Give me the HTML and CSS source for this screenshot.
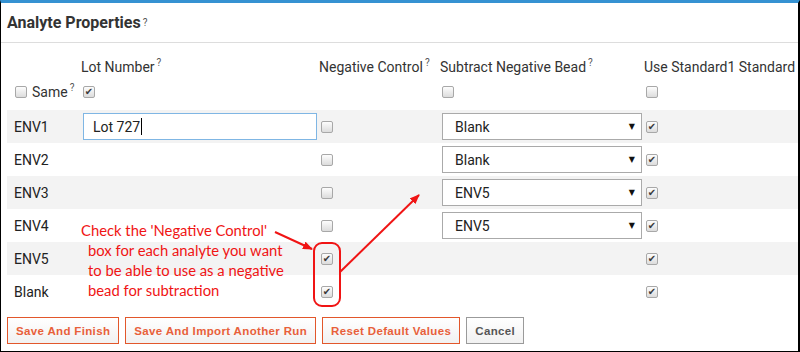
FILE: index.html
```html
<!DOCTYPE html>
<html>
<head>
<meta charset="utf-8">
<link rel="stylesheet" href="styles.css">
</head>
<body>
<div class="frame">
  <div class="title">Analyte Properties<sup class="q">?</sup></div>
  <div class="panel">
    <div class="row head">
      <div></div>
      <div>Lot Number<sup class="q">?</sup></div>
      <div>Negative Control<sup class="q">?</sup></div>
      <div>Subtract Negative Bead<sup class="q">?</sup></div>
      <div class="clip">Use Standard1 Standard</div>
    </div>
    <div class="row same">
      <div class="samecell"><span class="cb"></span><span class="samelbl">Same<sup class="q">?</sup></span></div>
      <div class="cell"><span class="cb on">✔</span></div>
      <div></div>
      <div class="cell"><span class="cb"></span></div>
      <div class="cell"><span class="cb"></span></div>
    </div>
    <div class="rows">
      <div class="row data alt">
        <div class="lbl">ENV1</div>
        <div class="cell"><div class="input">Lot 727<span class="caret"></span></div></div>
        <div class="cell"><span class="cb"></span></div>
        <div class="cell"><div class="select"><span>Blank</span><span class="arr">▼</span></div></div>
        <div class="cell"><span class="cb on">✔</span></div>
      </div>
      <div class="row data">
        <div class="lbl">ENV2</div>
        <div></div>
        <div class="cell"><span class="cb"></span></div>
        <div class="cell"><div class="select"><span>Blank</span><span class="arr">▼</span></div></div>
        <div class="cell"><span class="cb on">✔</span></div>
      </div>
      <div class="row data alt">
        <div class="lbl">ENV3</div>
        <div></div>
        <div class="cell"><span class="cb"></span></div>
        <div class="cell"><div class="select"><span>ENV5</span><span class="arr">▼</span></div></div>
        <div class="cell"><span class="cb on">✔</span></div>
      </div>
      <div class="row data">
        <div class="lbl">ENV4</div>
        <div></div>
        <div class="cell"><span class="cb"></span></div>
        <div class="cell"><div class="select"><span>ENV5</span><span class="arr">▼</span></div></div>
        <div class="cell"><span class="cb on">✔</span></div>
      </div>
      <div class="row data alt">
        <div class="lbl">ENV5</div>
        <div></div>
        <div class="cell"><span class="cb on">✔</span></div>
        <div></div>
        <div class="cell"><span class="cb on">✔</span></div>
      </div>
      <div class="row data">
        <div class="lbl">Blank</div>
        <div></div>
        <div class="cell"><span class="cb on">✔</span></div>
        <div></div>
        <div class="cell"><span class="cb on">✔</span></div>
      </div>
    </div>
    <div class="buttons">
      <span class="btn">Save And Finish</span>
      <span class="btn">Save And Import Another Run</span>
      <span class="btn">Reset Default Values</span>
      <span class="btn cancel">Cancel</span>
    </div>
  </div>
</div>
<div class="note">
  <div class="l1">Check the 'Negative Control'</div>
  <div class="ln">box for each analyte you want</div>
  <div class="ln">to be able to use as a negative</div>
  <div class="ln">bead for subtraction</div>
</div>
<svg class="overlay" width="800" height="352" viewBox="0 0 800 352">
  <defs>
    <marker id="ah" markerWidth="10" markerHeight="8" refX="9" refY="4" orient="auto" markerUnits="userSpaceOnUse">
      <path d="M0,0 L10,4 L0,8 Z" fill="#f01414"/>
    </marker>
  </defs>
  <line x1="275" y1="232" x2="312" y2="249" stroke="#f01414" stroke-width="2" marker-end="url(#ah)"/>
  <rect x="314" y="243" width="26" height="63" rx="8" ry="8" fill="none" stroke="#f01414" stroke-width="2"/>
  <line x1="340" y1="272" x2="419" y2="195" stroke="#f01414" stroke-width="2" marker-end="url(#ah)"/>
</svg>
</body>
</html>
```
FILE: styles.css
```css
html, body {
  margin: 0;
  padding: 0;
  background: #fff;
}
body {
  position: relative;
  width: 800px;
  height: 352px;
  overflow: hidden;
  font-family: Roboto, "Liberation Sans", sans-serif;
  color: #333;
}
.frame {
  box-sizing: border-box;
  width: 800px;
  height: 352px;
  border-top: 3px solid #3592d2;
  border-left: 1px solid #000;
  border-right: 2px solid #000;
  border-bottom: 1px solid #000;
  overflow: hidden;
}
.title {
  height: 40px;
  box-sizing: border-box;
  padding-left: 6px;
  display: flex;
  align-items: center;
  font-size: 16px;
  font-weight: bold;
  color: #333;
  border-bottom: 1px solid #ddd;
}
.q {
  font-size: 10px;
  font-weight: normal;
  color: #555;
  margin-left: 2px;
  vertical-align: 6px;
  line-height: 0;
}
.panel {
  padding: 14px 0 0 6px;
}
.row {
  display: grid;
  grid-template-columns: 74px 238px 121px 204px 1fr;
  align-items: center;
}
.head {
  height: 20px;
  font-size: 14px;
  color: #333;
  white-space: nowrap;
}
.clip {
  overflow: hidden;
}
.same {
  height: 30px;
  margin-bottom: 3px;
}
.samecell {
  display: flex;
  align-items: center;
  padding-left: 8px;
}
.samelbl {
  font-size: 14px;
  margin-left: 5px;
}
.cell {
  display: flex;
  align-items: center;
  padding-left: 2px;
}
.data {
  height: 33px;
}
.alt {
  background: #f3f3f3;
}
.lbl {
  padding-left: 7px;
  font-size: 14px;
  color: #222;
}
.cb {
  box-sizing: border-box;
  width: 12px;
  height: 12px;
  border: 1px solid #a8a8a8;
  border-radius: 2px;
  background: linear-gradient(#fdfdfd, #dcdcdc);
  display: inline-flex;
  align-items: center;
  justify-content: center;
  font-family: "DejaVu Sans", sans-serif;
  font-size: 10px;
  line-height: 1;
  color: #3a3a3a;
}
.input {
  box-sizing: border-box;
  width: 234px;
  height: 27px;
  border: 1px solid #7fb6e4;
  background: #fff;
  padding-left: 9px;
  display: flex;
  align-items: center;
  font-size: 14px;
  color: #222;
}
.caret {
  display: inline-block;
  width: 1px;
  height: 17px;
  background: #000;
  margin-left: 1px;
}
.select {
  box-sizing: border-box;
  width: 200px;
  height: 27px;
  border: 1px solid #aaa;
  background: #fff;
  padding: 0 6px 0 12px;
  display: flex;
  align-items: center;
  justify-content: space-between;
  font-size: 14px;
  color: #222;
}
.arr {
  font-family: "DejaVu Sans", sans-serif;
  font-size: 8px;
  color: #111;
}
.buttons {
  display: flex;
  gap: 6px;
  margin-top: 9px;
}
.btn {
  box-sizing: border-box;
  height: 27px;
  padding: 0 8px;
  display: inline-flex;
  align-items: center;
  border: 1px solid #e2572b;
  background: linear-gradient(#ffffff, #f1f1f1);
  font-family: "Liberation Sans", Arial, sans-serif;
  font-size: 11.5px;
  font-weight: bold;
  color: #e8603a;
  letter-spacing: 0.35px;
}
.cancel {
  border-color: #9a9a9a;
  color: #555;
}
.note {
  position: absolute;
  left: 81px;
  top: 220px;
  font-family: Lato, "Open Sans", sans-serif;
  font-size: 14.8px;
  line-height: 20px;
  color: #f01414;
  white-space: nowrap;
}
.note .ln {
  padding-left: 7px;
}
.overlay {
  position: absolute;
  left: 0;
  top: 0;
  pointer-events: none;
}
```
